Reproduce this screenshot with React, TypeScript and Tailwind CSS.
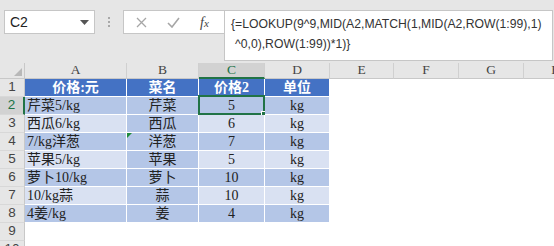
import React from "react";

const W = ["w-[25px]", "w-[102px]", "w-[72px]", "w-[66px]", "w-[65px]", "w-[64px]", "w-[65px]", "w-[65px]", "w-[65px]"];
const LETTERS = ["A", "B", "C", "D", "E", "F", "G", "H"];

const rows: string[][] = [
  ["芹菜5/kg", "芹菜", "5", "kg"],
  ["西瓜6/kg", "西瓜", "6", "kg"],
  ["7/kg洋葱", "洋葱", "7", "kg"],
  ["苹果5/kg", "苹果", "5", "kg"],
  ["萝卜10/kg", "萝卜", "10", "kg"],
  ["10/kg蒜", "蒜", "10", "kg"],
  ["4姜/kg", "姜", "4", "kg"],
];

const cellFont = { fontFamily: '"Liberation Serif", "Noto Sans CJK SC", serif' };

function RowHeader({ n, active }: { n: number; active?: boolean }) {
  return (
    <div
      className={`${W[0]} h-full shrink-0 flex items-center justify-center text-[13.5px] border-b border-[#d8d8d8] ${
        active ? "bg-[#d2d2d2] text-[#217346] border-r-2 border-r-[#217346]" : "bg-[#e6e6e6] text-[#444] border-r border-r-[#c8c8c8]"
      }`}
      style={{ fontFamily: '"Liberation Sans", Arial, sans-serif' }}
    >
      {n}
    </div>
  );
}

export default function App() {
  return (
    <div className="w-[554px] h-[246px] overflow-hidden bg-white relative">
      {/* top bar */}
      <div className="h-[63px] bg-[#e6e6e6] flex items-start pt-[10px]">
        <div className="shrink-0 ml-[4px] w-[91px] h-[24px] bg-white border border-[#c6c6c6] flex items-center justify-between pl-[5px] pr-[5px]">
          <span className="text-[14px] text-[#222]" style={{ fontFamily: '"Liberation Sans", Arial, sans-serif' }}>C2</span>
          <svg width="9" height="5" viewBox="0 0 9 5"><path d="M0 0 L9 0 L4.5 5 Z" fill="#555" /></svg>
        </div>
        <div className="shrink-0 w-[28px] h-[24px] flex flex-col items-center justify-center gap-[2px]">
          <div className="w-[2px] h-[2px] bg-[#a8a8a8]" />
          <div className="w-[2px] h-[2px] bg-[#a8a8a8]" />
          <div className="w-[2px] h-[2px] bg-[#a8a8a8]" />
        </div>
        <div className="shrink-0 w-[101px] h-[24px] bg-white border border-[#c6c6c6] border-r-0 flex items-center">
          <svg className="ml-[12px]" width="11" height="11" viewBox="0 0 11 11">
            <path d="M1 1 L10 10 M10 1 L1 10" stroke="#a6a6a6" strokeWidth="1.3" />
          </svg>
          <svg className="ml-[20px]" width="13" height="11" viewBox="0 0 13 11">
            <path d="M1 6 L5 10 L12 1" stroke="#a6a6a6" strokeWidth="1.6" fill="none" />
          </svg>
          <span className="ml-[20px] text-[14px] italic text-[#444]" style={{ fontFamily: '"Liberation Serif", serif' }}>
            f<span className="text-[11px]">x</span>
          </span>
        </div>
        <div className="flex-1 min-w-0 overflow-hidden mr-[1px] h-[51px] bg-white border border-[#c6c6c6] pl-[6px] pt-[3px] text-[12.2px] leading-[20px] text-[#333]" style={{ fontFamily: '"Liberation Sans", Arial, sans-serif' }}>
          <div className="whitespace-nowrap">{"{=LOOKUP(9^9,MID(A2,MATCH(1,MID(A2,ROW(1:99),1)"}</div>
          <div className="whitespace-nowrap pl-[4px]">{"^0,0),ROW(1:99))*1)}"}</div>
        </div>
      </div>

      {/* column headers */}
      <div className="flex h-[16px]">
        <div className={`${W[0]} shrink-0 bg-[#e6e6e6] border-r border-b border-[#c8c8c8] relative`}>
          <svg className="absolute right-[2px] bottom-[2px]" width="8" height="8" viewBox="0 0 8 8"><path d="M8 0 L8 8 L0 8 Z" fill="#b8b8b8" /></svg>
        </div>
        {LETTERS.map((l, i) => (
          <div
            key={l}
            className={`${W[i + 1]} shrink-0 flex items-center justify-center text-[13.5px] border-r border-r-[#d0d0d0] ${
              l === "C" ? "bg-[#d2d2d2] text-[#217346] border-b-2 border-b-[#217346]" : "bg-[#e6e6e6] text-[#444] border-b border-b-[#c8c8c8]"
            }`}
            style={{ fontFamily: '"Liberation Serif", serif' }}
          >
            {l}
          </div>
        ))}
      </div>

      {/* row 1 header */}
      <div className="flex h-[18px]">
        <RowHeader n={1} />
        {["价格:元", "菜名", "价格2", "单位"].map((t, i) => (
          <div
            key={t}
            className={`${W[i + 1]} shrink-0 bg-[#4472c4] text-white font-bold text-[14px] flex items-center justify-center border-r border-b border-white`}
            style={cellFont}
          >
            {t}
          </div>
        ))}
      </div>

      {rows.map((r, ri) => {
        const dark = ri % 2 === 0;
        const bg = dark ? "bg-[#b4c6e7]" : "bg-[#d9e1f2]";
        return (
          <div key={ri} className="flex h-[18px]">
            <RowHeader n={ri + 2} active={ri === 0} />
            {r.map((t, ci) => (
              <div
                key={ci}
                className={`${W[ci + 1]} shrink-0 ${ci === 1 ? "bg-[#b4c6e7]" : bg} text-[14px] text-[#222] flex items-center border-r border-b border-white relative ${
                  ci === 0 ? "justify-start pl-[2px]" : "justify-center"
                }`}
                style={cellFont}
              >
                {t}
                {ri === 2 && ci === 1 && (
                  <div className="absolute left-0 top-0 w-0 h-0 border-t-[5px] border-t-[#1e8a3c] border-r-[5px] border-r-transparent" />
                )}
                {ri === 0 && ci === 2 && (
                  <>
                    <div className="absolute -left-px -top-[2px] -right-px -bottom-px border-2 border-[#217346]" />
                    <div className="absolute -right-[3px] -bottom-[3px] w-[6px] h-[6px] bg-[#217346] border border-white" />
                  </>
                )}
              </div>
            ))}
          </div>
        );
      })}

      <div className="flex h-[18px]">
        <RowHeader n={9} />
      </div>
      <div className="flex h-[18px]">
        <RowHeader n={10} />
      </div>
    </div>
  );
}
